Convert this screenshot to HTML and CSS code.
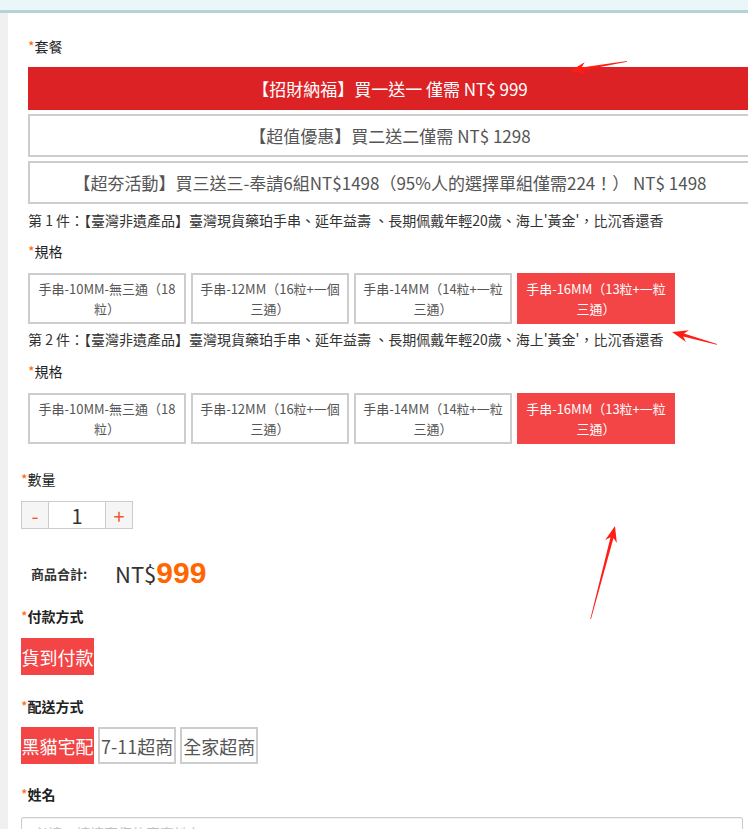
FILE: index.html
```html
<!DOCTYPE html>
<html lang="zh-Hant">
<head>
<meta charset="utf-8">
<title>訂購表單</title>
<link rel="stylesheet" href="styles.css">
</head>
<body>
<div class="topbar"></div>
<div class="page">
  <aside class="rail"></aside>
  <main class="form">
    <section class="combo">
      <div class="label"><span class="req">*</span>套餐</div>
      <div class="packages">
        <div class="pkg active">【招財納福】買一送一 僅需 NT$ 999</div>
        <div class="pkg">【超值優惠】買二送二僅需 NT$ 1298</div>
        <div class="pkg">【超夯活動】買三送三-奉請6組NT$1498（95%人的選擇單組僅需224！） NT$ 1498</div>
      </div>
      <p class="item-name">第 1 件：【臺灣非遺產品】臺灣現貨藥珀手串、延年益壽 、長期佩戴年輕20歲、海上'黃金'，比沉香還香</p>
      <div class="label label-spec"><span class="req">*</span>規格</div>
      <div class="specs">
        <div class="spec">手串-10MM-無三通（18<br>粒）</div>
        <div class="spec">手串-12MM（16粒+一個<br>三通）</div>
        <div class="spec">手串-14MM（14粒+一粒<br>三通）</div>
        <div class="spec on">手串-16MM（13粒+一粒<br>三通）</div>
      </div>
      <p class="item-name item-second">第 2 件：【臺灣非遺產品】臺灣現貨藥珀手串、延年益壽 、長期佩戴年輕20歲、海上'黃金'，比沉香還香</p>
      <div class="label label-spec2"><span class="req">*</span>規格</div>
      <div class="specs">
        <div class="spec">手串-10MM-無三通（18<br>粒）</div>
        <div class="spec">手串-12MM（16粒+一個<br>三通）</div>
        <div class="spec">手串-14MM（14粒+一粒<br>三通）</div>
        <div class="spec on">手串-16MM（13粒+一粒<br>三通）</div>
      </div>
    </section>

    <div class="label label-qty"><span class="req">*</span>數量</div>
    <div class="stepper">
      <span class="step">-</span>
      <span class="count">1</span>
      <span class="step">+</span>
    </div>

    <div class="total">
      <span class="total-label">商品合計:</span>
      <span class="price"><span class="cur">NT$</span><span class="amount">999</span></span>
    </div>

    <div class="label label-bold label-pay"><span class="req">*</span>付款方式</div>
    <div class="chips chips-pay">
      <span class="chip on">貨到付款</span>
    </div>

    <div class="label label-bold label-ship"><span class="req">*</span>配送方式</div>
    <div class="chips chips-ship">
      <span class="chip on">黑貓宅配</span>
      <span class="chip">7-11超商</span>
      <span class="chip">全家超商</span>
    </div>

    <div class="label label-bold label-name"><span class="req">*</span>姓名</div>
    <input class="text-input" type="text" placeholder="必填，請填寫您的真實姓名">
  </main>
</div>

<svg class="annotations" width="748" height="829" viewBox="0 0 748 829" aria-hidden="true">
  <polygon points="627,61 581.5,67.4 584.7,62.3 570,71 586.8,74.1 582.1,70.4 627,61.8"/>
  <polygon points="717,344 684,333.6 689,330.3 672,332 686,341.9 683.2,336.6 716.8,344.8"/>
  <polygon points="591,619 613.5,538 616.8,543 615,526 605.2,540 610.5,537.2 590.3,619"/>
</svg>
</body>
</html>
```

FILE: styles.css
```css
html, body {
  margin: 0;
  padding: 0;
  background: #ffffff;
  overflow: hidden;
}

body {
  position: relative;
  width: 748px;
  height: 829px;
  font-family: "Noto Sans CJK TC", "Noto Sans", sans-serif;
  color: #333;
}

.topbar {
  height: 10px;
  background: #eaf6f7;
  border-bottom: 3px solid #b3d3d6;
}

.page {
  display: flex;
  min-height: 816px;
}

.rail {
  width: 8px;
  flex: none;
  background: #f0f0f0;
}

.form {
  flex: 1;
  padding: 0 5px 0 13px;
  min-width: 0;
}

/* labels */
.label {
  height: 20px;
  line-height: 20px;
  font-size: 14px;
  color: #222;
  margin-top: 23px;
}
.label-bold { font-weight: bold; font-size: 14px; }
.req { color: #ff6600; font-weight: normal; }

/* package combo section */
.combo {
  padding-left: 7px;
}

.packages {
  width: 724px;
  margin-top: 11px;
  display: flex;
  flex-direction: column;
  gap: 4px;
}

.pkg {
  box-sizing: border-box;
  height: 43px;
  border: 2px solid #cdcdcd;
  background: #fff;
  color: #555;
  font-size: 17px;
  display: flex;
  align-items: center;
  justify-content: center;
  white-space: nowrap;
}
.pkg.active {
  background: #dd2226;
  border-color: #dd2226;
  color: #fff;
}

.item-name {
  margin: 6px 0 0;
  height: 20px;
  line-height: 20px;
  font-size: 14px;
  color: #333;
  white-space: nowrap;
}
.item-second { margin-top: 5px; }

.label-spec { margin-top: 11px; }
.label-spec2 { margin-top: 12px; }

.specs {
  margin-top: 12px;
  display: flex;
  gap: 5px;
}

.spec {
  box-sizing: border-box;
  width: 158px;
  height: 51px;
  border: 2px solid #cdcdcd;
  background: #fff;
  color: #555;
  font-size: 13px;
  line-height: 20px;
  text-align: center;
  padding-top: 4px;
  white-space: nowrap;
}
.spec.on {
  background: #f34446;
  border-color: #f34446;
  color: #fff;
}

/* quantity */
.label-qty { margin-top: 25px; }

.stepper {
  margin-top: 12px;
  display: inline-flex;
  height: 28px;
  box-sizing: border-box;
  border: 1px solid #cccccc;
  vertical-align: top;
}
.step {
  width: 26px;
  background: #f5f5f5;
  color: #f05a2a;
  font-size: 20px;
  display: flex;
  align-items: center;
  justify-content: center;
}
.count {
  width: 56px;
  border-left: 1px solid #cccccc;
  border-right: 1px solid #cccccc;
  font-size: 20px;
  color: #333;
  display: flex;
  align-items: center;
  justify-content: center;
  background: #fff;
}

/* total */
.total {
  margin-top: 26px;
  height: 36px;
  display: flex;
  align-items: center;
  padding-left: 10px;
}
.total-label {
  width: 84px;
  font-size: 13px;
  font-weight: bold;
  color: #333;
}
.price {
  display: inline-flex;
  align-items: baseline;
}
.cur {
  font-size: 22px;
  color: #333;
}
.amount {
  font-family: "Liberation Sans", Arial, sans-serif;
  font-weight: bold;
  font-size: 30px;
  color: #ff6600;
}

/* chips */
.label-pay { margin-top: 15px; }
.label-ship { margin-top: 21px; }
.label-name { margin-top: 20px; }

.chips {
  display: flex;
  gap: 4px;
}
.chips-pay { margin-top: 12px; }
.chips-ship { margin-top: 11px; }

.chip {
  box-sizing: border-box;
  height: 37px;
  padding: 0 1px;
  border: 2px solid #cdcdcd;
  background: #fff;
  color: #555;
  font-size: 18px;
  display: inline-flex;
  align-items: center;
  white-space: nowrap;
}
.chip.on {
  background: #f34446;
  border-color: #f34446;
  color: #fff;
  padding: 0;
  border-width: 0;
  width: 73px;
  justify-content: center;
}

/* name input */
.text-input {
  display: block;
  box-sizing: border-box;
  margin-top: 13px;
  width: 722px;
  height: 32px;
  border: 1px solid #cccccc;
  border-radius: 2px;
  box-shadow: inset 0 1px 1px rgba(0,0,0,0.06);
  padding: 0 12px;
  font-family: "Noto Sans CJK TC", sans-serif;
  font-size: 14px;
  color: #333;
}
.text-input::placeholder { color: #c0c0c0; }

/* annotation arrows */
.annotations {
  position: absolute;
  left: 0;
  top: 0;
  pointer-events: none;
}
.annotations polygon {
  fill: #ff1d14;
}
```
